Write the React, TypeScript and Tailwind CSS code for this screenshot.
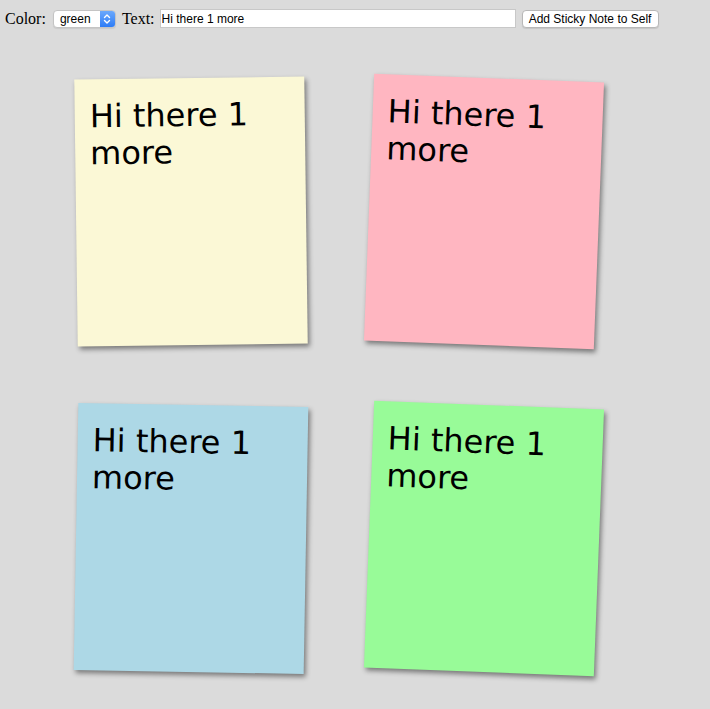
import React from 'react';

const notes = [
  { bg: 'bg-[#fbf8d6]', rot: 'rotate-[-0.75deg]' },
  { bg: 'bg-[#ffb6c1]', rot: 'rotate-[2.2deg]' },
  { bg: 'bg-[#add8e6]', rot: 'rotate-[1deg]' },
  { bg: 'bg-[#98fb98]', rot: 'rotate-[2.2deg]' },
];

const App = () => {
  return (
    <div className="min-h-[709px] w-full bg-[#dbdbdb] font-['Liberation_Serif',serif] text-black">
      {/* toolbar */}
      <div className="flex h-[38px] items-center gap-[6px] pl-[5px] pb-[1px] text-[16px]">
        <span>Color:</span>
        <div className="ml-[1px] flex h-[18px] w-[63px] items-center overflow-hidden rounded-[4px] border border-[#c4c4c4] bg-white shadow-[0_1px_1px_rgba(0,0,0,0.08)]">
          <span className="flex-1 pl-[6px] font-['Liberation_Sans',sans-serif] text-[12px] leading-none">green</span>
          <div className="flex h-full w-[15px] items-center justify-center bg-gradient-to-b from-[#6aa8fc] to-[#2d7cf6]">
            <svg width="8" height="12" viewBox="0 0 8 12" fill="none" stroke="white" strokeWidth="1.4" strokeLinecap="round" strokeLinejoin="round">
              <path d="M1.5 4.5 L4 2 L6.5 4.5" />
              <path d="M1.5 7.5 L4 10 L6.5 7.5" />
            </svg>
          </div>
        </div>
        <span>Text:</span>
        <input
          defaultValue="Hi there 1 more"
          className="ml-[-1px] h-[19px] w-[356px] border border-[#c8c8c8] bg-white px-[1px] font-['Liberation_Sans',sans-serif] text-[12px] text-black outline-none"
        />
        <button className="h-[18px] w-[137px] rounded-[4px] border border-[#b8b8b8] bg-white font-['Liberation_Sans',sans-serif] text-[12px] leading-none text-black shadow-[0_1px_1px_rgba(0,0,0,0.1)]">
          Add Sticky Note to Self
        </button>
      </div>

      {/* notes */}
      <div className="mt-[40px] grid w-max grid-cols-[230px_230px] gap-x-[63px] gap-y-[60px] pl-[76px]">
        {notes.map((n, i) => (
          <div
            key={i}
            className={`h-[267px] w-[230px] ${n.bg} ${n.rot} pl-[15px] pt-[19px] font-['DejaVu_Sans',Verdana,sans-serif] text-[32px] leading-[37px] shadow-[2px_3px_5px_rgba(0,0,0,0.45)]`}
          >
            Hi there 1<br />more
          </div>
        ))}
      </div>
    </div>
  );
};

export default App;
